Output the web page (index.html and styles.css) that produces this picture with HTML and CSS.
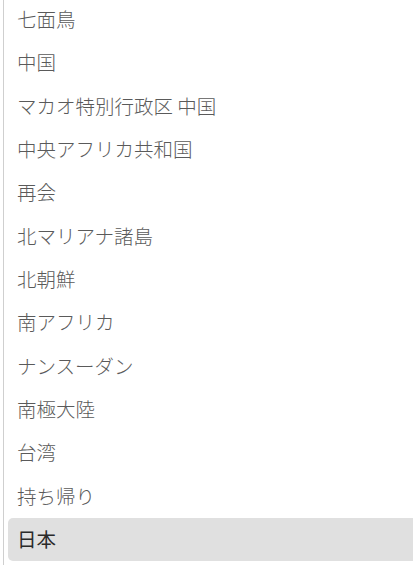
FILE: index.html
```html
<!DOCTYPE html>
<html lang="ja">
<head>
<meta charset="utf-8">
<link rel="stylesheet" href="styles.css">
</head>
<body>
<ul class="menu">
  <li class="item">七面鳥</li>
  <li class="item">中国</li>
  <li class="item">マカオ特別行政区 中国</li>
  <li class="item">中央アフリカ共和国</li>
  <li class="item">再会</li>
  <li class="item">北マリアナ諸島</li>
  <li class="item">北朝鮮</li>
  <li class="item">南アフリカ</li>
  <li class="item">ナンスーダン</li>
  <li class="item">南極大陸</li>
  <li class="item">台湾</li>
  <li class="item">持ち帰り</li>
  <li class="item selected">日本</li>
</ul>
</body>
</html>
```
FILE: styles.css
```css
html, body {
  margin: 0;
  padding: 0;
  overflow: hidden;
  height: 100%;
  background: #fff;
}
.menu {
  list-style: none;
  margin: -7px 0 0 3px;
  padding: 4px 0 14px 4px;
  border: 1px solid #cfcfcf;
  border-right: none;
  border-radius: 7px 0 0 7px;
  font-family: "Noto Sans CJK JP", "Noto Sans", sans-serif;
  font-size: 19.5px;
  font-weight: 300;
  color: #5a5a5a;
}
.item {
  height: 43.33px;
  line-height: 42.5px;
  padding: 0 9px;
  border-radius: 5px 0 0 5px;
  white-space: nowrap;
}
.selected {
  background: #e0e0e0;
  color: #2a2a2a;
  font-weight: 400;
}
```
